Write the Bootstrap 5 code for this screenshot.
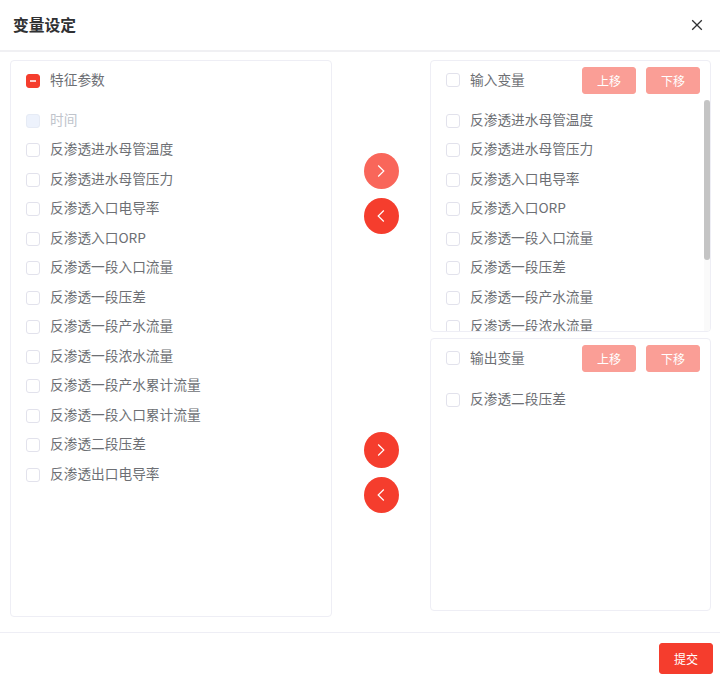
<!DOCTYPE html>
<html lang="zh">
<head>
<meta charset="utf-8">
<title>变量设定</title>
<link href="https://cdn.jsdelivr.net/npm/bootstrap@5.3.0/dist/css/bootstrap.min.css" rel="stylesheet">
<style>
html,body{height:100%;overflow:hidden;background:#fff}
body{font-family:"Noto Sans CJK SC","Noto Sans",sans-serif;font-size:13.7px;color:#6d6f74}
.dlg{width:720px;height:682px}
.dlg-head{height:52px;padding:0 16px 0 13px;border-bottom:2px solid #f0f0f3}
.dlg-title{font-size:15.75px;font-weight:700;color:#303133;line-height:1}
.dlg-x{width:14px;height:14px;padding:0;border:0;background:none;display:block}
.dlg-x svg{display:block}
.dlg-body{height:580px;padding:8px 9px 0 10px}
.pane{border:1px solid #eeeef5;border-radius:4px;background:#fff}
.pane-left{width:322px;height:557px}
.mid{width:98px}
.side{width:281px}
.pane-r1{height:272px;position:relative}
.pane-r2{height:273px;margin-top:6px}
.pane-head{height:39px;padding:0 10px 0 15px}
.pane-head-left{height:39px;padding:0 15px}
.rows-left{padding:6px 15px 0}
.rows-out{padding:7px 15px 0}
.rows-right{padding:6px 0 0 15px;height:232px;overflow:hidden}
.bar-track{position:absolute;top:39px;right:0;bottom:0;width:6px;background:#fafafa}
.bar-thumb{height:160px;background:#c4c4c4;border-radius:3px}
.row-item{height:29.5px;gap:10px;line-height:1;white-space:nowrap}
.row-item span{margin-top:-2px}
.head-label span{margin-top:-3px}
.head-label{gap:10px}
.form-check-input.tick{width:14px;height:14px;margin:0;flex:none;border:1px solid #e2e2ec;border-radius:3px;background-color:#fff;opacity:1}
.form-check-input.tick:indeterminate{background-color:#f53d2d;border-color:#f53d2d;background-image:url("data:image/svg+xml,%3csvg xmlns='http://www.w3.org/2000/svg' viewBox='0 0 12 12'%3e%3cpath d='M3 6h6' stroke='%23fff' stroke-width='1.3'/%3e%3c/svg%3e")}
.form-check-input.tick:disabled{background-color:#edf2fc;border-color:#e6ebf5;opacity:1}
.row-item .txt-off{color:#c0c4cc}
.btn.move{width:54px;height:27px;padding:1px 0 0;font-size:12px;line-height:1;color:#fff;background:#fa9e96;border:1px solid #fa9e96;border-radius:3px;opacity:1}
.move-gap{gap:10px}
.btn.round{width:35px;height:36px;padding:0;border-radius:50%;background:#f53d2d;border:0;opacity:1}
.btn.round.soft{background:#f9665a}
.round svg{display:block;margin:0 auto}
.arrow-set{height:272px;padding-bottom:5px}
.arrow-set-b{height:273px;margin-top:6px;padding-bottom:4px}
.round-pair{gap:9px}
.dlg-foot{height:50px;border-top:1px solid #eeeef5;padding:10px 7px 0 0}
.btn.send{width:54px;height:31px;padding:0;font-size:12px;line-height:1;color:#fff;background:#f53d2d;border:1px solid #f53d2d;border-radius:3px}
</style>
</head>
<body>
<div class="dlg d-flex flex-column">
  <div class="dlg-head d-flex align-items-center justify-content-between">
    <span class="dlg-title">变量设定</span>
    <button class="dlg-x" type="button" aria-label="关闭">
      <svg width="14" height="14" viewBox="0 0 14 14" fill="none" stroke="#303133" stroke-width="1.3"><path d="M2.2 2.2 11.8 11.8M11.8 2.2 2.2 11.8"/></svg>
    </button>
  </div>
  <div class="dlg-body d-flex align-items-start">
    <div class="pane pane-left">
      <div class="pane-head-left d-flex align-items-center head-label">
        <input id="allbox" class="form-check-input tick" type="checkbox"><span>特征参数</span>
      </div>
      <div class="rows-left">
        <div class="row-item d-flex align-items-center"><input class="form-check-input tick" type="checkbox" disabled><span class="txt-off">时间</span></div>
        <div class="row-item d-flex align-items-center"><input class="form-check-input tick" type="checkbox"><span>反渗透进水母管温度</span></div>
        <div class="row-item d-flex align-items-center"><input class="form-check-input tick" type="checkbox"><span>反渗透进水母管压力</span></div>
        <div class="row-item d-flex align-items-center"><input class="form-check-input tick" type="checkbox"><span>反渗透入口电导率</span></div>
        <div class="row-item d-flex align-items-center"><input class="form-check-input tick" type="checkbox"><span>反渗透入口ORP</span></div>
        <div class="row-item d-flex align-items-center"><input class="form-check-input tick" type="checkbox"><span>反渗透一段入口流量</span></div>
        <div class="row-item d-flex align-items-center"><input class="form-check-input tick" type="checkbox"><span>反渗透一段压差</span></div>
        <div class="row-item d-flex align-items-center"><input class="form-check-input tick" type="checkbox"><span>反渗透一段产水流量</span></div>
        <div class="row-item d-flex align-items-center"><input class="form-check-input tick" type="checkbox"><span>反渗透一段浓水流量</span></div>
        <div class="row-item d-flex align-items-center"><input class="form-check-input tick" type="checkbox"><span>反渗透一段产水累计流量</span></div>
        <div class="row-item d-flex align-items-center"><input class="form-check-input tick" type="checkbox"><span>反渗透一段入口累计流量</span></div>
        <div class="row-item d-flex align-items-center"><input class="form-check-input tick" type="checkbox"><span>反渗透二段压差</span></div>
        <div class="row-item d-flex align-items-center"><input class="form-check-input tick" type="checkbox"><span>反渗透出口电导率</span></div>
      </div>
    </div>
    <div class="mid d-flex flex-column">
      <div class="arrow-set d-flex justify-content-center align-items-center">
        <div class="round-pair d-flex flex-column">
          <button class="btn round soft" type="button" aria-label="右移"><svg width="12" height="12" viewBox="0 0 12 12" fill="none" stroke="#fff" stroke-width="1.2"><path d="M3.2 .5 8.8 6 3.2 11.5"/></svg></button>
          <button class="btn round" type="button" aria-label="左移"><svg width="12" height="12" viewBox="0 0 12 12" fill="none" stroke="#fff" stroke-width="1.2"><path d="M8.8 .5 3.2 6 8.8 11.5"/></svg></button>
        </div>
      </div>
      <div class="arrow-set-b d-flex justify-content-center align-items-center">
        <div class="round-pair d-flex flex-column">
          <button class="btn round" type="button" aria-label="右移"><svg width="12" height="12" viewBox="0 0 12 12" fill="none" stroke="#fff" stroke-width="1.2"><path d="M3.2 .5 8.8 6 3.2 11.5"/></svg></button>
          <button class="btn round" type="button" aria-label="左移"><svg width="12" height="12" viewBox="0 0 12 12" fill="none" stroke="#fff" stroke-width="1.2"><path d="M8.8 .5 3.2 6 8.8 11.5"/></svg></button>
        </div>
      </div>
    </div>
    <div class="side d-flex flex-column">
      <div class="pane pane-r1 overflow-hidden">
        <div class="pane-head d-flex align-items-center justify-content-between">
          <div class="head-label d-flex align-items-center"><input class="form-check-input tick" type="checkbox"><span>输入变量</span></div>
          <div class="move-gap d-flex"><button class="btn move" type="button" disabled>上移</button><button class="btn move" type="button" disabled>下移</button></div>
        </div>
        <div class="rows-right">
          <div class="row-item d-flex align-items-center"><input class="form-check-input tick" type="checkbox"><span>反渗透进水母管温度</span></div>
          <div class="row-item d-flex align-items-center"><input class="form-check-input tick" type="checkbox"><span>反渗透进水母管压力</span></div>
          <div class="row-item d-flex align-items-center"><input class="form-check-input tick" type="checkbox"><span>反渗透入口电导率</span></div>
          <div class="row-item d-flex align-items-center"><input class="form-check-input tick" type="checkbox"><span>反渗透入口ORP</span></div>
          <div class="row-item d-flex align-items-center"><input class="form-check-input tick" type="checkbox"><span>反渗透一段入口流量</span></div>
          <div class="row-item d-flex align-items-center"><input class="form-check-input tick" type="checkbox"><span>反渗透一段压差</span></div>
          <div class="row-item d-flex align-items-center"><input class="form-check-input tick" type="checkbox"><span>反渗透一段产水流量</span></div>
          <div class="row-item d-flex align-items-center"><input class="form-check-input tick" type="checkbox"><span>反渗透一段浓水流量</span></div>
        </div>
        <div class="bar-track"><div class="bar-thumb"></div></div>
      </div>
      <div class="pane pane-r2">
        <div class="pane-head d-flex align-items-center justify-content-between">
          <div class="head-label d-flex align-items-center"><input class="form-check-input tick" type="checkbox"><span>输出变量</span></div>
          <div class="move-gap d-flex"><button class="btn move" type="button" disabled>上移</button><button class="btn move" type="button" disabled>下移</button></div>
        </div>
        <div class="rows-out">
          <div class="row-item d-flex align-items-center"><input class="form-check-input tick" type="checkbox"><span>反渗透二段压差</span></div>
        </div>
      </div>
    </div>
  </div>
  <div class="dlg-foot d-flex justify-content-end align-items-start">
    <button class="btn send" type="button">提交</button>
  </div>
</div>
<script src="https://cdn.jsdelivr.net/npm/bootstrap@5.3.0/dist/js/bootstrap.bundle.min.js"></script>
<script>document.getElementById('allbox').indeterminate=true;</script>
</body>
</html>
